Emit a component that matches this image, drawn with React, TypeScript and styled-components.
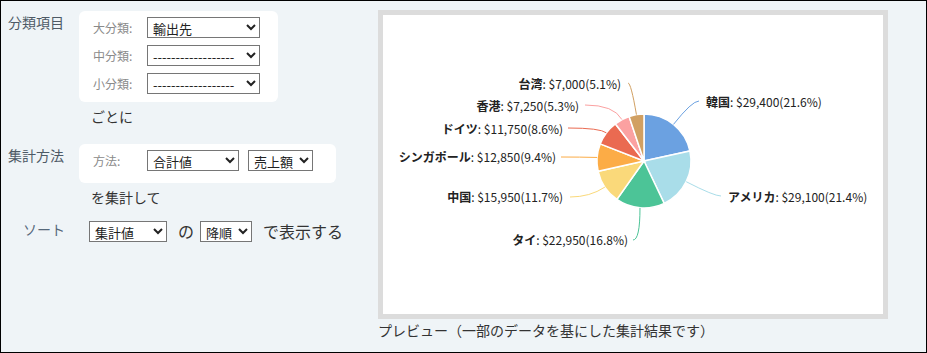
import React from 'react'
import styled, { createGlobalStyle } from 'styled-components'

const GlobalStyle = createGlobalStyle`
  html, body {
    margin: 0;
    padding: 0;
  }
  body {
    font-family: "Noto Sans CJK JP", "Noto Sans", sans-serif;
    color: #333;
  }
`

const Page = styled.div`
  display: flex;
  width: 927px;
  height: 353px;
  box-sizing: border-box;
  border: 1px solid #000;
  background: #eff4f7;
`

const Settings = styled.div`
  width: 377px;
  box-sizing: border-box;
  padding: 10px 0 0 7px;
`

const Section = styled.div`
  display: flex;
  align-items: flex-start;
`

const SectionTitle = styled.div`
  width: 71px;
  font-size: 14px;
  line-height: 20px;
  color: #4e5a66;
  margin-top: 1px;
`

const Card = styled.div<{ $width: number; $padding: string }>`
  display: flex;
  flex-direction: column;
  gap: 7px;
  width: ${(p) => p.$width}px;
  box-sizing: border-box;
  padding: ${(p) => p.$padding};
  background: #fff;
  border-radius: 6px;
`

const FieldRow = styled.div`
  display: flex;
  align-items: center;
`

const FieldLabel = styled.span`
  width: 54px;
  font-size: 12px;
  line-height: 16px;
  color: #8a8a8a;
`

const Select = styled.select<{ $width: number }>`
  width: ${(p) => p.$width}px;
  height: 21px;
  box-sizing: border-box;
  margin: 0;
  padding: 0 0 0 1px;
  border: 1px solid #767676;
  border-radius: 0;
  background: #fff;
  color: #222;
  font-family: "Noto Sans CJK JP", sans-serif;
  font-size: 13px;
`

const Gap = styled.span<{ $size: number }>`
  display: inline-block;
  width: ${(p) => p.$size}px;
`

const Suffix = styled.div`
  margin: 4px 0 18px 83px;
  font-size: 14px;
  line-height: 20px;
  color: #333;
`

const SortRow = styled.div`
  display: flex;
  align-items: center;
  margin-top: -5px;
  padding-left: 15px;
`

const SortLabel = styled.span`
  width: 66px;
  font-size: 14px;
  line-height: 20px;
  color: #56687a;
  margin-top: -4px;
`

const Connector = styled.span<{ $left: number; $right: number }>`
  margin: 0 ${(p) => p.$right}px 0 ${(p) => p.$left}px;
  font-size: 16px;
  line-height: 22px;
  color: #333;
`

const Preview = styled.div`
  display: flex;
  flex-direction: column;
  margin-top: 9px;
`

const Frame = styled.div`
  width: 510px;
  height: 309px;
  box-sizing: border-box;
  border: 5px solid #dcdcdc;
  background: #fff;
`

const Caption = styled.div`
  margin-top: 1px;
  font-size: 14px;
  line-height: 20px;
  color: #333;
`

const ChartSvg = styled.svg`
  display: block;
  font-family: "Noto Sans CJK JP", sans-serif;
  font-size: 12px;
`

type Slice = {
  name: string
  value: number
  color: string
  ctrl: [number, number]
  end: [number, number]
  text: [number, number]
  anchor: 'start' | 'end'
}

const SALES: Slice[] = [
  { name: '韓国', value: 29400, color: '#6ba1e1', ctrl: [692, 101], end: [699, 101], text: [706, 107], anchor: 'start' },
  { name: 'アメリカ', value: 29100, color: '#a9dde9', ctrl: [714, 196], end: [721, 196], text: [728, 202], anchor: 'start' },
  { name: 'タイ', value: 22950, color: '#4cc497', ctrl: [640, 240], end: [633, 240], text: [628, 245], anchor: 'end' },
  { name: '中国', value: 15950, color: '#fad97a', ctrl: [590, 197], end: [570, 197], text: [563, 202], anchor: 'end' },
  { name: 'シンガポール', value: 12850, color: '#fcac46', ctrl: [580, 157], end: [561, 157], text: [556, 162], anchor: 'end' },
  { name: 'ドイツ', value: 11750, color: '#ea6a51', ctrl: [600, 128], end: [568, 128], text: [563, 134], anchor: 'end' },
  { name: '香港', value: 7250, color: '#fba1a1', ctrl: [614, 105], end: [585, 105], text: [579, 111], anchor: 'end' },
  { name: '台湾', value: 7000, color: '#d1a062', ctrl: [631, 83], end: [628, 83], text: [621, 89], anchor: 'end' },
]

const CX = 644
const CY = 161
const R = 47

const point = (deg: number, r: number) => {
  const rad = (deg * Math.PI) / 180
  return [CX + r * Math.sin(rad), CY - r * Math.cos(rad)]
}

function PieChart() {
  const total = SALES.reduce((s, d) => s + d.value, 0)
  let start = 0

  return (
    <ChartSvg width={500} height={299} viewBox="383 15 500 299">
      {SALES.map((d) => {
        const sweep = (d.value / total) * 360
        const from = point(start, R)
        const to = point(start + sweep, R)
        const mid = point(start + sweep / 2, R)
        start += sweep
        const pct = ((d.value / total) * 100).toFixed(1)
        return (
          <g key={d.name}>
            <path
              d={`M${CX},${CY} L${from[0]},${from[1]} A${R},${R} 0 ${sweep > 180 ? 1 : 0} 1 ${to[0]},${to[1]} Z`}
              fill={d.color}
              stroke="#fff"
              strokeWidth={1.5}
            />
            <path
              d={`M${mid[0]},${mid[1]} Q${d.ctrl[0]},${d.ctrl[1]} ${d.end[0]},${d.end[1]}`}
              fill="none"
              stroke={d.color}
              strokeWidth={1}
            />
            <text x={d.text[0]} y={d.text[1]} textAnchor={d.anchor} fill="#222">
              <tspan fontWeight="bold">{d.name}</tspan>
              <tspan>: ${d.value.toLocaleString('en-US')}({pct}%)</tspan>
            </text>
          </g>
        )
      })}
    </ChartSvg>
  )
}

const DASHES = '------------------'

export default function App() {
  return (
    <>
      <GlobalStyle />
      <Page>
        <Settings>
          <Section>
            <SectionTitle>分類項目</SectionTitle>
            <Card $width={199} $padding="6px 14px 8px">
              <FieldRow>
                <FieldLabel>大分類:</FieldLabel>
                <Select $width={113} defaultValue="輸出先">
                  <option>輸出先</option>
                </Select>
              </FieldRow>
              <FieldRow>
                <FieldLabel>中分類:</FieldLabel>
                <Select $width={113}>
                  <option>{DASHES}</option>
                </Select>
              </FieldRow>
              <FieldRow>
                <FieldLabel>小分類:</FieldLabel>
                <Select $width={113}>
                  <option>{DASHES}</option>
                </Select>
              </FieldRow>
            </Card>
          </Section>
          <Suffix>ごとに</Suffix>

          <Section>
            <SectionTitle>集計方法</SectionTitle>
            <Card $width={257} $padding="6px 14px 12px">
              <FieldRow>
                <FieldLabel>方法:</FieldLabel>
                <Select $width={92}>
                  <option>合計値</option>
                </Select>
                <Gap $size={9} />
                <Select $width={65}>
                  <option>売上額</option>
                </Select>
              </FieldRow>
            </Card>
          </Section>
          <Suffix>を集計して</Suffix>

          <SortRow>
            <SortLabel>ソート</SortLabel>
            <Select $width={78}>
              <option>集計値</option>
            </Select>
            <Connector $left={11} $right={6}>の</Connector>
            <Select $width={52}>
              <option>降順</option>
            </Select>
            <Connector $left={11} $right={0}>で表示する</Connector>
          </SortRow>
        </Settings>

        <Preview>
          <Frame>
            <PieChart />
          </Frame>
          <Caption>プレビュー（一部のデータを基にした集計結果です）</Caption>
        </Preview>
      </Page>
    </>
  )
}
